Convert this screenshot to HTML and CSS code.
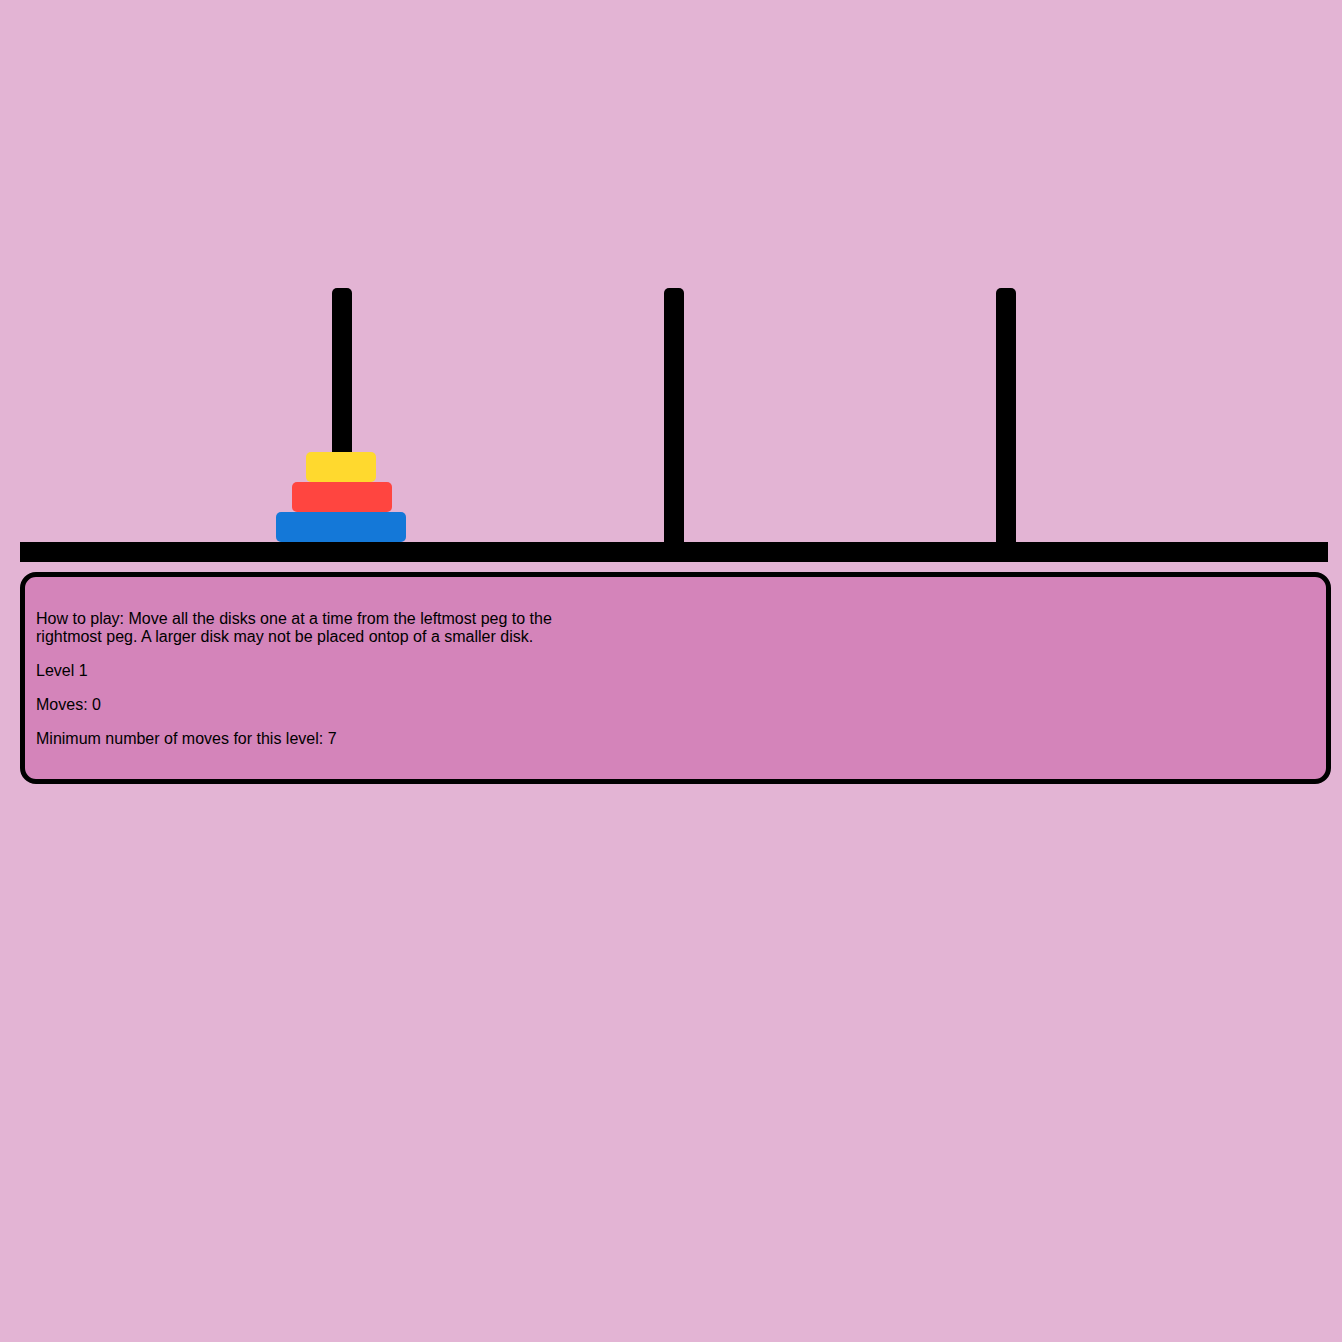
FILE: index.html
```html
<!DOCTYPE html>
<html>
<head>
<meta charset="utf-8">
<title>Tower of Hanoi</title>
<link rel="stylesheet" href="styles.css">
</head>
<body>
<div class="game">
  <div class="board">
    <div class="pegs">
      <div class="column">
        <div class="peg"></div>
        <div class="stack">
          <div class="disk disk-1"></div>
          <div class="disk disk-2"></div>
          <div class="disk disk-3"></div>
        </div>
      </div>
      <div class="column">
        <div class="peg"></div>
        <div class="stack"></div>
      </div>
      <div class="column">
        <div class="peg"></div>
        <div class="stack"></div>
      </div>
    </div>
    <div class="base"></div>
  </div>
  <div class="info">
    <p class="rules">How to play: Move all the disks one at a time from the leftmost peg to the rightmost peg. A larger disk may not be placed ontop of a smaller disk.</p>
    <p>Level 1</p>
    <p>Moves: 0</p>
    <p>Minimum number of moves for this level: 7</p>
  </div>
</div>
</body>
</html>
```
FILE: styles.css
```css
html, body {
  margin: 0;
  padding: 0;
}
body {
  background: #e3b4d4;
  font-family: "Liberation Sans", Arial, sans-serif;
  font-size: 16px;
  color: #000;
  min-height: 1342px;
}
.game {
  padding-top: 288px;
}
.board {
  margin-left: 20px;
  width: 1308px;
}
.pegs {
  display: grid;
  grid-template-columns: repeat(3, 332px);
  justify-content: center;
  height: 254px;
}
.column {
  display: grid;
  justify-items: center;
  align-items: end;
}
.peg {
  grid-area: 1 / 1;
  width: 20px;
  height: 254px;
  background: #000;
  border-radius: 5px 5px 0 0;
}
.stack {
  grid-area: 1 / 1;
  display: flex;
  flex-direction: column;
  align-items: center;
  width: 100%;
}
.disk {
  height: 30px;
  border-radius: 5px;
}
.disk-1 {
  width: 70px;
  margin-right: 2px;
  background: #ffd92e;
}
.disk-2 {
  width: 100px;
  background: #ff4540;
}
.disk-3 {
  width: 130px;
  margin-right: 2px;
  background: #1478d8;
}
.base {
  height: 20px;
  background: #000;
}
.info {
  margin: 10px 11px 0 20px;
  border: 5px solid #000;
  border-radius: 16px;
  background: #d484ba;
  padding: 17px 11px 15px;
}
.info p {
  margin: 16px 0;
}
.info .rules {
  max-width: 530px;
}
```
